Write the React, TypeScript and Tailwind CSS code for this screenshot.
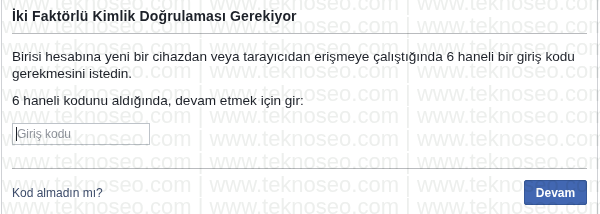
import React from 'react'

const WM = 'www.teknoseo.com | www.teknoseo.com | www.teknoseo.com | www.teknoseo.com'

function Watermark() {
  return (
    <div className="pointer-events-none absolute left-0 top-[-8px] w-full mix-blend-multiply select-none">
      {Array.from({ length: 11 }).map((_, i) => (
        <div key={i} className="h-[22.7px] whitespace-nowrap pl-[2px] text-[22px] leading-[22.7px] text-[#edefed]">
          {WM}
        </div>
      ))}
    </div>
  )
}

export default function App() {
  return (
    <div className="relative h-[214px] w-[600px] overflow-hidden bg-white font-['Liberation_Sans',Arial,sans-serif] text-[13.6px] text-[#1d2129]">
      <div className="ml-[1px] flex h-full w-[597px] flex-col border-x border-[#cfd1d5] px-[10px]">
        <div className="flex h-[34px] items-center border-b border-[#b9bbbe] pb-[2px]">
          <h1 className="text-[14px] font-bold leading-4 tracking-[0.15px]">İki Faktörlü Kimlik Doğrulaması Gerekiyor</h1>
        </div>

        <div className="flex-1 pt-[14px]">
          <p className="leading-[17px]">
            Birisi hesabına yeni bir cihazdan veya tarayıcıdan erişmeye çalıştığında 6 haneli bir giriş kodu gerekmesini istedin.
          </p>
          <p className="mt-[10px] leading-[17px]">6 haneli kodunu aldığında, devam etmek için gir:</p>
          <div className="relative mt-[14px] w-[138px]">
            <input
              type="text"
              placeholder="Giriş kodu"
              className="h-[22px] w-full border border-[#bec3c9] bg-transparent pl-[4px] text-[12px] outline-none placeholder:text-[#90949c]"
            />
            <span className="absolute left-[4px] top-[4px] h-[14px] w-px bg-[#1d2129]" />
          </div>
        </div>

        <div className="flex h-[46px] items-center justify-between border-t border-[#b9bbbe] pt-[2px]">
          <a className="text-[12px] text-[#3e4d6c]">Kod almadın mı?</a>
          <button className="h-[25px] w-[63px] rounded-[2px] border border-[#365899] bg-[#4267b2] text-[12px] font-bold text-white">
            Devam
          </button>
        </div>
      </div>
      <Watermark />
    </div>
  )
}
